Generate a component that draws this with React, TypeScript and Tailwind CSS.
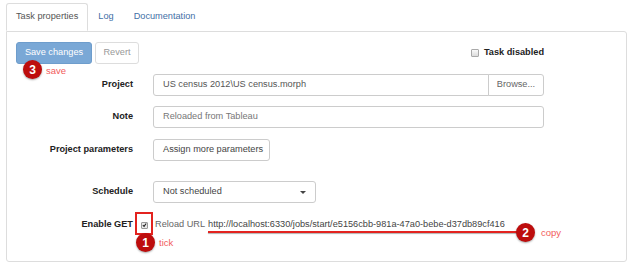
import React from "react";

const Badge = ({ n, className }: { n: string; className: string }) => (
  <div
    className={`absolute w-[19px] h-[19px] rounded-full bg-[#bd0d0d] shadow-[0_1px_2px_rgba(0,0,0,0.35)] flex items-center justify-center text-white font-bold text-[12px] leading-none ${className}`}
  >
    {n}
  </div>
);

const App = () => {
  return (
    <div className="relative w-[640px] h-[270px] bg-white text-[#333] font-['Liberation_Sans',Arial,sans-serif] text-[9.2px] leading-none">
      {/* tabs */}
      <div className="flex pl-[6px] pt-[3px]">
        <div className="relative z-10 -mb-px h-[28px] px-[9px] flex items-center bg-white border border-[#ddd] border-b-white rounded-t-[3px] text-[#555]">
          Task properties
        </div>
        <div className="ml-[1px] h-[28px] px-[9px] flex items-center text-[#3f6fa6]">
          Log
        </div>
        <div className="ml-[2px] h-[28px] px-[9px] flex items-center text-[#3f6fa6]">
          Documentation
        </div>
      </div>

      {/* panel */}
      <div className="mx-[6px] w-[621px] h-[231px] border border-[#ddd] rounded-b-[3px] rounded-tr-[3px] pt-[10px] pl-[9px]">
        <div className="w-[528px]">
          <div className="flex items-center justify-between h-[22px]">
            <div className="flex items-center">
              <div className="w-[76px] h-[22px] flex items-center justify-center rounded-[3px] bg-[#7aa8d6] border border-[#6e9dcc] text-white">
                Save changes
              </div>
              <div className="ml-[3px] w-[44px] h-[22px] flex items-center justify-center rounded-[3px] border border-[#ddd] text-[#999]">
                Revert
              </div>
            </div>
            <div className="flex items-center font-bold text-[#222]">
              <span className="w-[8px] h-[8px] rounded-[1px] border border-[#a9a9a9] bg-gradient-to-b from-[#fafafa] to-[#dcdcdc]" />
              <span className="ml-[5px]">Task disabled</span>
            </div>
          </div>

          <div className="flex items-center mt-[10px]">
            <div className="w-[117px] text-right font-bold text-[#222]">Project</div>
            <div className="ml-[20px] flex">
              <div className="w-[336px] h-[22px] flex items-center pl-[9px] border border-[#ccc] rounded-l-[3px] text-[#555]">
                US census 2012\US census.morph
              </div>
              <div className="-ml-px w-[56px] h-[22px] flex items-center justify-center border border-[#ccc] rounded-r-[3px] text-[#666]">
                Browse...
              </div>
            </div>
          </div>

          <div className="flex items-center mt-[10px]">
            <div className="w-[117px] text-right font-bold text-[#222]">Note</div>
            <div className="ml-[20px] w-[391px] h-[22px] flex items-center pl-[9px] border border-[#ccc] rounded-[3px] text-[#777]">
              Reloaded from Tableau
            </div>
          </div>

          <div className="flex items-center mt-[11px]">
            <div className="w-[117px] text-right font-bold text-[#222]">Project parameters</div>
            <div className="ml-[20px] w-[117px] h-[22px] flex items-center pl-[9px] border border-[#ccc] rounded-[3px] text-[#444]">
              Assign more parameters
            </div>
          </div>

          <div className="flex items-center mt-[20px]">
            <div className="w-[117px] text-right font-bold text-[#222]">Schedule</div>
            <div className="ml-[20px] w-[163px] h-[22px] flex items-center justify-between pl-[9px] pr-[9px] border border-[#ccc] rounded-[3px] text-[#444]">
              <span>Not scheduled</span>
              <span className="w-0 h-0 border-l-[3px] border-r-[3px] border-t-[3px] border-l-transparent border-r-transparent border-t-[#444]" />
            </div>
          </div>

          <div className="flex items-center mt-[15px] h-[14px]">
            <div className="w-[117px] text-right font-bold text-[#222]">Enable GET</div>
            <span className="ml-[8px] w-[7px] h-[7px] flex items-center justify-center border border-[#999] bg-[#e8e8e8] rounded-[1px]">
              <svg width="6" height="6" viewBox="0 0 6 6">
                <path d="M1 3.2 L2.5 4.6 L5 1.2" stroke="#222" strokeWidth="1.3" fill="none" />
              </svg>
            </span>
            <span className="ml-[7px] text-[#666]">Reload URL</span>
            <span className="ml-[3px] text-[#444]">
              http://localhost:6330/jobs/start/e5156cbb-981a-47a0-bebe-d37db89cf416
            </span>
          </div>
        </div>
      </div>

      {/* annotations */}
      <div className="absolute left-[135px] top-[212px] w-[18px] h-[23px] border-2 border-[#e3231f]" />
      <div className="absolute left-[208px] top-[231px] w-[310px] h-[2px] bg-[#e3231f] shadow-[0_1px_1px_rgba(0,0,0,0.3)]" />
      <Badge n="1" className="left-[136px] top-[233px]" />
      <span className="absolute left-[159px] top-[238px] text-[9.5px] text-[#f25c5c]">tick</span>
      <Badge n="2" className="left-[516px] top-[223px]" />
      <span className="absolute left-[541px] top-[228px] text-[9.5px] text-[#f25c5c]">copy</span>
      <Badge n="3" className="left-[23px] top-[60px]" />
      <span className="absolute left-[46px] top-[66px] text-[9.5px] text-[#f25c5c]">save</span>
    </div>
  );
};

export default App;
